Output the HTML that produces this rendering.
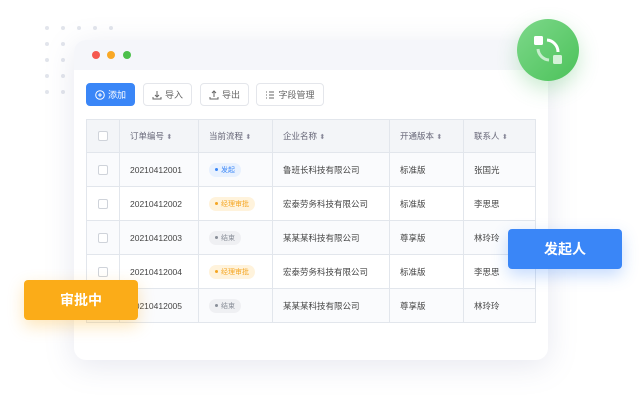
<!DOCTYPE html><html><head><meta charset="utf-8"><style>
*{margin:0;padding:0;box-sizing:border-box}
body{width:640px;height:400px;background:#fff;font-family:"Liberation Sans","Noto Sans CJK SC",sans-serif;position:relative;overflow:hidden;color:#444}
.dot{position:absolute;width:4px;height:4px;border-radius:50%;background:#e2e5ec}
.card{position:absolute;left:74px;top:40px;width:474px;height:320px;background:#fff;border-radius:12px;box-shadow:0 6px 30px rgba(120,130,170,.18);overflow:hidden}
.bar{height:30px;background:#f5f6fa;position:relative}
.bar i{position:absolute;top:11px;width:8px;height:8px;border-radius:50%}
.btn{position:absolute;top:43px;height:23px;border:1px solid #e4e6eb;border-radius:4px;font-size:9px;color:#666;display:flex;align-items:center;justify-content:center;gap:3px}
table{position:absolute;left:12px;top:79px;border-collapse:collapse;font-size:8.5px;width:450px;border:1px solid #e2e6ec}
td,th{border:1px solid #e2e6ec;height:34px;text-align:left;padding-left:10px;font-weight:normal}
th{background:#f3f5f8;color:#667;height:33px}
tr:nth-child(even) td{background:#fafbfd}
.cb{width:10px;height:10px;border:1px solid #cfd3da;border-radius:2px;background:#fff;margin-left:1px}
.tag{display:inline-block;font-size:7px;padding:2px 6px;border-radius:8px}
.tag:before{content:"";display:inline-block;width:3px;height:3px;border-radius:50%;background:currentColor;margin-right:3px;vertical-align:middle}
.s{font-size:7px;color:#889}
</style></head><body>
<div class="dot" style="left:45px;top:26px"></div><div class="dot" style="left:61px;top:26px"></div><div class="dot" style="left:77px;top:26px"></div><div class="dot" style="left:93px;top:26px"></div><div class="dot" style="left:109px;top:26px"></div>
<div class="dot" style="left:45px;top:42px"></div><div class="dot" style="left:61px;top:42px"></div>
<div class="dot" style="left:45px;top:58px"></div><div class="dot" style="left:61px;top:58px"></div>
<div class="dot" style="left:45px;top:74px"></div><div class="dot" style="left:61px;top:74px"></div>
<div class="dot" style="left:45px;top:90px"></div><div class="dot" style="left:61px;top:90px"></div>
<div class="card">
<div class="bar"><i style="left:18px;background:#f5584f"></i><i style="left:33px;background:#f9a825"></i><i style="left:49px;background:#4cc04a"></i></div>
<div class="btn" style="left:12px;width:49px;background:#3a86f7;border-color:#3a86f7;color:#fff"><svg width="10" height="10" viewBox="0 0 10 10"><circle cx="5" cy="5" r="4.3" stroke="#fff" fill="none"/><path d="M5 3v4M3 5h4" stroke="#fff"/></svg>添加</div>
<div class="btn" style="left:69px;width:49px"><svg width="10" height="10" viewBox="0 0 10 10" stroke="#666" fill="none"><path d="M5 1v6M3 5l2 2 2-2M1 7v2h8V7"/></svg>导入</div>
<div class="btn" style="left:126px;width:49px"><svg width="10" height="10" viewBox="0 0 10 10" stroke="#666" fill="none"><path d="M5 7V1M3 3l2-2 2 2M1 7v2h8V7"/></svg>导出</div>
<div class="btn" style="left:182px;width:68px"><svg width="10" height="10" viewBox="0 0 10 10" stroke="#666" fill="none"><path d="M1 2h1M4 2h5M1 5h1M4 5h5M1 8h1M4 8h5"/></svg>字段管理</div>
<table>
<tr><th style="width:33px"><div class="cb"></div></th><th style="width:79px">订单编号 <span class="s">⬍</span></th><th style="width:74px">当前流程 <span class="s">⬍</span></th><th style="width:117px">企业名称 <span class="s">⬍</span></th><th style="width:74px">开通版本 <span class="s">⬍</span></th><th>联系人 <span class="s">⬍</span></th></tr>
<tr><td><div class="cb"></div></td><td>20210412001</td><td><span class="tag" style="background:#e8f1fe;color:#3a86f7">发起</span></td><td>鲁班长科技有限公司</td><td>标准版</td><td>张国光</td></tr>
<tr><td><div class="cb"></div></td><td>20210412002</td><td><span class="tag" style="background:#fff3dc;color:#f5a623">经理审批</span></td><td>宏泰劳务科技有限公司</td><td>标准版</td><td>李思思</td></tr>
<tr><td><div class="cb"></div></td><td>20210412003</td><td><span class="tag" style="background:#eff0f3;color:#8a8f99">结束</span></td><td>某某某科技有限公司</td><td>尊享版</td><td>林玲玲</td></tr>
<tr><td><div class="cb"></div></td><td>20210412004</td><td><span class="tag" style="background:#fff3dc;color:#f5a623">经理审批</span></td><td>宏泰劳务科技有限公司</td><td>标准版</td><td>李思思</td></tr>
<tr><td><div class="cb"></div></td><td>20210412005</td><td><span class="tag" style="background:#eff0f3;color:#8a8f99">结束</span></td><td>某某某科技有限公司</td><td>尊享版</td><td>林玲玲</td></tr>
</table>
</div>
<div style="position:absolute;left:517px;top:19px;width:62px;height:62px;border-radius:50%;background:linear-gradient(135deg,#7dd88a,#4cc25a);box-shadow:0 8px 20px rgba(80,190,100,.3)">
<svg width="62" height="62" viewBox="0 0 62 62"><rect x="17" y="17" width="9" height="9" rx="1.5" fill="#fff"/><rect x="36" y="36" width="9" height="9" rx="1.5" fill="#d4f2d8"/><path d="M30 21 A12 12 0 0 1 41 33" stroke="#fff" stroke-width="3" fill="none"/><path d="M21 30 A12 12 0 0 0 32 41" stroke="#c8eecd" stroke-width="3" fill="none"/></svg></div>
<div style="position:absolute;left:508px;top:229px;width:114px;height:40px;border-radius:4px;background:#3a86f7;color:#fff;font-size:14px;font-weight:bold;display:flex;align-items:center;justify-content:center;box-shadow:0 6px 16px rgba(58,134,247,.3)">发起人</div>
<div style="position:absolute;left:24px;top:280px;width:114px;height:40px;border-radius:4px;background:#fbac18;color:#fff;font-size:14px;font-weight:bold;display:flex;align-items:center;justify-content:center;box-shadow:0 6px 16px rgba(251,172,24,.3)">审批中</div>
</body></html>
